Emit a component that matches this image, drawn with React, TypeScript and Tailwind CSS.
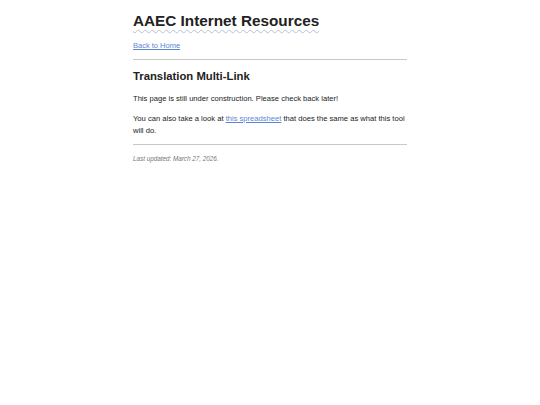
import React from "react";

const App = () => {
  return (
    <div className="min-h-screen bg-white" style={{ fontFamily: '"Liberation Sans", Arial, sans-serif' }}>
      <div className="mx-auto w-[274px] pt-[12px] text-[#222]">
        <h1 className="text-[15.3px] font-bold leading-[18px] text-[#222] underline decoration-wavy decoration-[#b4c0dc] decoration-[1px] underline-offset-[3px]">
          AAEC Internet Resources
        </h1>
        <div className="mt-[11px] text-[7.5px] leading-[10px]">
          <a href="#" className="text-[#5b85d6] underline">Back to Home</a>
        </div>
        <hr className="mt-[8px] border-t border-[#c8c8c8]" />
        <h2 className="mt-[9px] text-[11.3px] font-bold leading-[14px] text-[#222]">Translation Multi-Link</h2>
        <p className="mt-[10px] text-[7.6px] leading-[12px]">
          This page is still under construction. Please check back later!
        </p>
        <p className="mt-[8px] text-[7.6px] leading-[12px]">
          You can also take a look at{" "}
          <a href="#" className="text-[#5b85d6] underline">this spreadsheet</a> that does the same as what this tool will do.
        </p>
        <hr className="mt-[7px] border-t border-[#c8c8c8]" />
        <p className="mt-[9px] text-[6.3px] italic leading-[10px] text-[#777]">Last updated: March 27, 2026.</p>
      </div>
    </div>
  );
};

export default App;
